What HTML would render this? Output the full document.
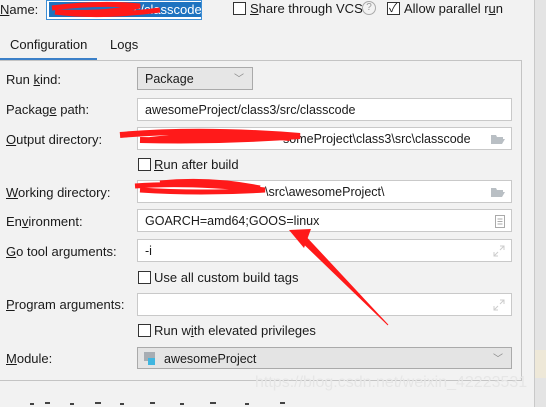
<!DOCTYPE html>
<html><head><meta charset="utf-8"><style>
*{box-sizing:border-box;margin:0;padding:0}
body{width:546px;height:407px;background:#f2f2f2;font-family:"Liberation Sans","Noto Sans CJK SC",sans-serif;font-size:13px;color:#1a1a1a;position:relative;overflow:hidden}
.a{position:absolute;white-space:nowrap}
.f{position:absolute;left:137px;width:375px;height:23px;background:#fff;border:1px solid #c9c9c9;padding:4px 0 0 7px;font-size:12.5px}
.cb{position:absolute;width:13px;height:13px;border:1px solid #333;background:#fff}
u{text-decoration:underline}
.ic{position:absolute;right:6px;top:5px}
</style></head><body>
<div class="a" style="left:0;top:2px"><u>N</u>ame:</div>
<div class="a" style="left:46px;top:0;width:156px;height:20px;border:1px solid #3d8fd6;background:#fff"></div>
<div class="a" style="left:49px;top:2px;width:152px;height:15px;background:#1e73c0;color:#fff;padding-left:74px;line-height:15px;overflow:hidden">src/classcode</div>
<div class="cb" style="left:233px;top:2px"></div><div class="a" style="left:250px;top:1px"><u>S</u>hare through VCS</div>
<div class="a" style="left:362px;top:1px;width:14px;height:14px;border:1px solid #aaa;border-radius:50%;color:#999;font-size:10px;text-align:center;line-height:12px">?</div>
<div class="cb" style="left:387px;top:2px"></div><div class="a" style="left:389px;top:-1px;font-size:12px">✓</div>
<div class="a" style="left:404px;top:1px">Allow parallel r<u>u</u>n</div>
<div class="a" style="left:534px;top:0;width:1px;height:407px;background:#c9c9c9"></div>
<div class="a" style="left:535px;top:0;width:11px;height:407px;background:#e4e4e4"></div>
<div class="a" style="left:535px;top:350px;width:11px;height:28px;background:#eee8d8"></div>
<div class="a" style="left:10px;top:37px">Configuration</div>
<div class="a" style="left:110px;top:37px">Logs</div>
<div class="a" style="left:0;top:58px;width:97px;height:3px;background:#3b80c8"></div>
<div class="a" style="left:-1px;top:60px;width:523px;height:321px;border:1px solid #c4c4c4"></div>
<div class="a" style="left:6px;top:72px">Run <u>k</u>ind:</div>
<div class="f" style="top:67px;width:116px;background:#e6e6e6;border-color:#aaa">Package<span style="position:absolute;right:8px;top:2px;color:#888;font-size:10px">﹀</span></div>
<div class="a" style="left:6px;top:102px">Packag<u>e</u> path:</div>
<div class="f" style="top:98px">awesomeProject/class3/src/classcode</div>
<div class="a" style="left:6px;top:132px"><u>O</u>utput directory:</div>
<div class="f" style="top:127px;padding-left:145px">someProject\class3\src\classcode<svg class="ic" width="15" height="12"><path d="M1 2h5l1 2h6v2H4L1 11z M4 6h11l-3 5H1z" fill="#b9bfc4"/></svg></div>
<div class="cb" style="left:138px;top:158px"></div><div class="a" style="left:154px;top:157px"><u>R</u>un after build</div>
<div class="a" style="left:6px;top:185px"><u>W</u>orking directory:</div>
<div class="f" style="top:180px;padding-left:127px">\src\awesomeProject\<svg class="ic" width="15" height="12"><path d="M1 2h5l1 2h6v2H4L1 11z M4 6h11l-3 5H1z" fill="#b9bfc4"/></svg></div>
<div class="a" style="left:6px;top:214px">En<u>v</u>ironment:</div>
<div class="f" style="top:209px">GOARCH=amd64;GOOS=linux<svg class="ic" width="10" height="13"><rect x=".5" y=".5" width="9" height="12" fill="none" stroke="#aaa"/><path d="M2.5 4h5M2.5 6.5h5M2.5 9h5" stroke="#aaa"/></svg></div>
<div class="a" style="left:6px;top:244px"><u>G</u>o tool arguments:</div>
<div class="f" style="top:239px">-i<svg class="ic" width="12" height="12"><path d="M7 1h4v4M11 1L7 5M1 7v4h4M1 11l4-4" stroke="#ccc" fill="none"/></svg></div>
<div class="cb" style="left:138px;top:271px"></div><div class="a" style="left:154px;top:270px">Use all custom build tags</div>
<div class="a" style="left:6px;top:297px"><u>P</u>rogram arguments:</div>
<div class="f" style="top:293px"><svg class="ic" width="12" height="12"><path d="M7 1h4v4M11 1L7 5M1 7v4h4M1 11l4-4" stroke="#ccc" fill="none"/></svg></div>
<div class="cb" style="left:138px;top:324px"></div><div class="a" style="left:154px;top:323px">Run w<u>i</u>th elevated privileges</div>
<div class="a" style="left:6px;top:351px"><u>M</u>odule:</div>
<div class="f" style="top:347px;height:22px;background:#e4e4e4;border-color:#aaa;padding-left:26px">awesomeProject<span style="position:absolute;right:8px;top:2px;color:#888;font-size:10px">﹀</span></div>
<div class="a" style="left:144px;top:352px;width:11px;height:9px;background:#a7adb3"></div>
<div class="a" style="left:148px;top:358px;width:7px;height:7px;background:#40b6e0"></div>
<div class="a" style="left:255px;top:374px;color:#e6e6e6;font-size:16px">https://blog.csdn.net/weixin_42223531</div>
<svg class="a" style="left:0;top:0" width="546" height="407">
<path d="M52 8 Q100 2 140 6 Q110 14 60 12 M55 12 Q100 18 160 10" stroke="#ff1a1a" stroke-width="5" fill="none"/>
<path d="M120 135 Q200 128 300 136 Q220 142 140 140 M150 140 Q230 132 290 138" stroke="#ff1a1a" stroke-width="6" fill="none"/>
<path d="M135 186 Q190 182 265 190 Q200 194 140 190 M160 183 Q210 178 260 188" stroke="#ff1a1a" stroke-width="5" fill="none"/>
<path d="M387 324 L388 325 L305 236 L300 240 Z" fill="#ff1a1a" stroke="#ff1a1a" stroke-width="1"/>
<path d="M289 230 L311 229 L304 248 Z" fill="#ff1a1a"/>
<path d="M30 404h4M45 403h5M70 404h4M95 403h6M120 404h4M150 403h5M180 404h4M210 403h6M245 404h4M280 403h5" stroke="#444" stroke-width="2"/>
</svg>
</body></html>
